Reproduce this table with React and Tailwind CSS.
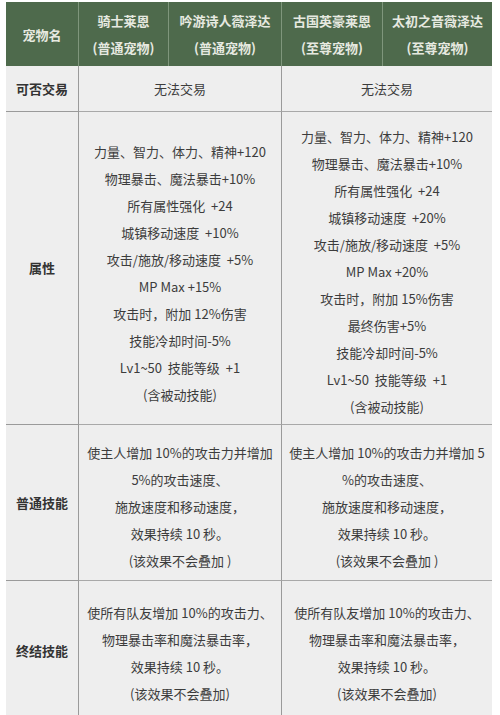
import React from 'react';

const attrsA = [
  '力量、智力、体力、精神+120',
  '物理暴击、魔法暴击+10%',
  '所有属性强化  +24',
  '城镇移动速度  +10%',
  '攻击/施放/移动速度  +5%',
  'MP Max +15%',
  '攻击时，附加 12%伤害',
  '技能冷却时间-5%',
  'Lv1~50  技能等级  +1',
  '(含被动技能)',
];

const attrsB = [
  '力量、智力、体力、精神+120',
  '物理暴击、魔法暴击+10%',
  '所有属性强化  +24',
  '城镇移动速度  +20%',
  '攻击/施放/移动速度  +5%',
  'MP Max +20%',
  '攻击时，附加 15%伤害',
  '最终伤害+5%',
  '技能冷却时间-5%',
  'Lv1~50  技能等级  +1',
  '(含被动技能)',
];

const skillA = [
  '使主人增加 10%的攻击力并增加',
  '5%的攻击速度、',
  '施放速度和移动速度，',
  '效果持续 10 秒。',
  '(该效果不会叠加 )',
];

const skillB = [
  '使主人增加 10%的攻击力并增加 5',
  '%的攻击速度、',
  '施放速度和移动速度，',
  '效果持续 10 秒。',
  '(该效果不会叠加 )',
];

const finalA = [
  '使所有队友增加 10%的攻击力、',
  '物理暴击率和魔法暴击率，',
  '效果持续 10 秒。',
  '(该效果不会叠加)',
];

const Lines = ({ lines, className = '' }) => (
  <div className={'flex flex-col items-center justify-center ' + className}>
    {lines.map((l, i) => (
      <div key={i} className="whitespace-pre leading-[27px]">{l}</div>
    ))}
  </div>
);

const Head = ({ children, last }) => (
  <div
    className={
      'flex flex-col items-center justify-center font-bold text-[#e6e9e0] leading-[27px] ' +
      (last ? '' : 'border-r border-[#7f967c]')
    }
  >
    {children}
  </div>
);

const Label = ({ children }) => (
  <div className="flex items-center justify-center font-bold text-[#333] border-r border-b border-[#9a9a9a]">
    {children}
  </div>
);

const Cell = ({ children, right }) => (
  <div
    className={
      'col-span-2 border-b border-[#a8a8a8] ' + (right ? '' : 'border-r border-r-[#9a9a9a]')
    }
  >
    {children}
  </div>
);

export default function App() {
  return (
    <div
      className="w-[500px] h-[715px] overflow-hidden bg-white pt-[2px] pl-[6px] text-[13px] text-[#3c3c3c]"
      style={{ fontFamily: '"Microsoft YaHei", "Noto Sans CJK SC", "Noto Sans", sans-serif' }}
    >
      <div className="w-[486px] bg-[#eeeeee] grid grid-cols-[73px_90px_113px_101px_109px] grid-rows-[64px_46px_313px_156px_140px]">
        <div className="col-span-5 grid grid-cols-[73px_90px_113px_101px_109px] bg-[#4e6a4c]">
          <Head>宠物名</Head>
          <Head>
            <div>骑士莱恩</div>
            <div>(普通宠物)</div>
          </Head>
          <Head>
            <div>吟游诗人薇泽达</div>
            <div>(普通宠物)</div>
          </Head>
          <Head>
            <div>古国英豪莱恩</div>
            <div>(至尊宠物)</div>
          </Head>
          <Head last>
            <div>太初之音薇泽达</div>
            <div>(至尊宠物)</div>
          </Head>
        </div>

        <Label>可否交易</Label>
        <Cell>
          <Lines lines={['无法交易']} className="h-full" />
        </Cell>
        <Cell right>
          <Lines lines={['无法交易']} className="h-full" />
        </Cell>

        <Label>属性</Label>
        <Cell>
          <Lines lines={attrsA} className="h-full pt-[10px]" />
        </Cell>
        <Cell right>
          <Lines lines={attrsB} className="h-full pt-[6px]" />
        </Cell>

        <Label>普通技能</Label>
        <Cell>
          <Lines lines={skillA} className="h-full pt-[8px]" />
        </Cell>
        <Cell right>
          <Lines lines={skillB} className="h-full pt-[8px]" />
        </Cell>

        <Label>终结技能</Label>
        <Cell>
          <Lines lines={finalA} className="h-full pt-[4px]" />
        </Cell>
        <Cell right>
          <Lines lines={finalA} className="h-full pt-[4px]" />
        </Cell>
      </div>
    </div>
  );
}
